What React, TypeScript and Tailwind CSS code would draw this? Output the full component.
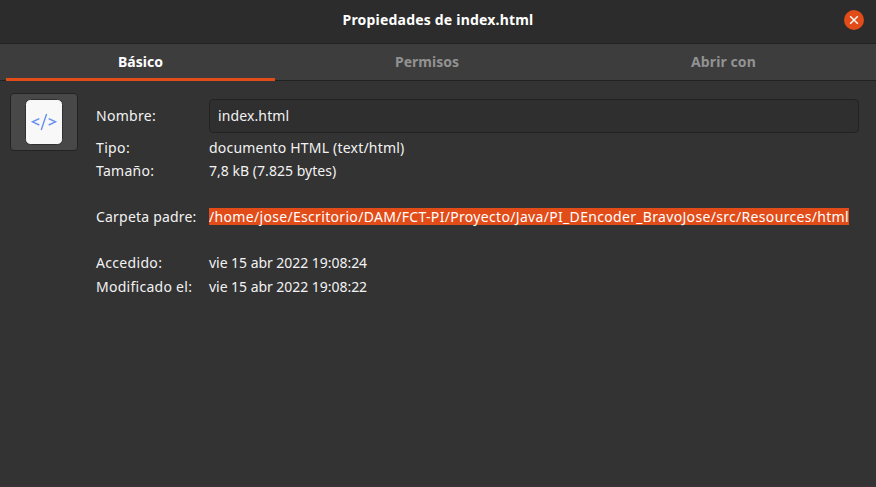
import React from "react";

type RowProps = { label: string; labelClass: string; rowClass: string; children: React.ReactNode };

function Row({ label, labelClass, rowClass, children }: RowProps) {
  return (
    <div className={`flex items-center ${rowClass}`}>
      <div className={`w-[113px] shrink-0 ${labelClass}`}>{label}</div>
      {children}
    </div>
  );
}

export default function App() {
  return (
    <div className="flex h-[487px] w-[876px] flex-col overflow-hidden border-b-2 border-[#3a3237] bg-[#333333] font-['Noto_Sans',sans-serif] text-[14px] leading-[18px] whitespace-nowrap text-[#f2f2f2]">
      <header className="flex h-[43px] shrink-0 items-center bg-[#2c2c2c] pr-3 pb-[3px] pl-8">
        <h1 className="flex-1 text-center text-[14px] font-bold tracking-[0.2px] text-white">
          <span>Propiedades de index.html</span>
        </h1>
        <button className="flex size-5 items-center justify-center rounded-full bg-[#e24c19]" aria-label="Cerrar">
          <svg width="10" height="10" viewBox="0 0 10 10" stroke="#fff" strokeWidth="1.4">
            <path d="M1.2 1.2 8.8 8.8M8.8 1.2 1.2 8.8" />
          </svg>
        </button>
      </header>
      <nav className="flex h-[38px] shrink-0 border-y border-[#222222] bg-[#3d3d3d] px-1.5 font-bold text-[#929292]">
        <div className="-mb-px flex w-[269px] items-center justify-center border-b-3 border-[#e24c19] pt-0.5 text-white"><span>Básico</span></div>
        <div className="flex w-[304px] items-center justify-center"><span>Permisos</span></div>
        <div className="flex flex-1 items-center justify-center pr-0.5"><span className="tracking-[0.1px]">Abrir con</span></div>
      </nav>
      <main className="flex flex-1 pt-3 pr-[17px] pl-2.5">
        <button className="flex h-[58px] w-[68px] items-center justify-center rounded-[4px] border border-[#232323] bg-[#484848]">
          <svg width="38" height="46" viewBox="0 0 38 46" fill="none">
            <rect x="0.5" y="0.5" width="37" height="45" rx="5" fill="#f8f8f8" stroke="#303030" />
            <path d="M14.3 19.7 7.5 22.8 14.3 26M23.7 19.7 30.5 22.8 23.7 26M21.6 15 16.2 31" stroke="#6590ef" strokeWidth="1.4" />
          </svg>
        </button>
        <section className="flex flex-1 flex-col pt-1.5 pl-[18px]">
          <Row label="Nombre:" labelClass="tracking-[0.28px]" rowClass="h-[34px]">
            <div className="flex h-[34px] flex-1 items-center rounded-[4px] border border-[#222222] bg-[#2f2f2f] px-2"><span className="tracking-[0.12px]">index.html</span></div>
          </Row>
          <Row label="Tipo:" labelClass="tracking-[0.35px]" rowClass="mt-1.5 h-[18px]"><span className="tracking-[0.2px]">documento HTML (text/html)</span></Row>
          <Row label="Tamaño:" labelClass="tracking-[0.28px]" rowClass="mt-[5px] h-[18px]"><span className="tracking-[0.03px]">7,8 kB (7.825 bytes)</span></Row>
          <Row label="Carpeta padre:" labelClass="tracking-[0.2px]" rowClass="mt-7 h-[18px]">
            <span className="-mt-px h-[17px] w-[640px] bg-[#e24c19] tracking-[0.32px] text-white">/home/jose/Escritorio/DAM/FCT-PI/Proyecto/Java/PI_DEncoder_BravoJose/src/Resources/html</span>
          </Row>
          <Row label="Accedido:" labelClass="tracking-[0.32px]" rowClass="mt-7 h-[18px]"><span className="tracking-[-0.04px]">vie 15 abr 2022 19:08:24</span></Row>
          <Row label="Modificado el:" labelClass="tracking-[0.27px]" rowClass="mt-1.5 h-[18px]"><span className="tracking-[-0.04px]">vie 15 abr 2022 19:08:22</span></Row>
        </section>
      </main>
    </div>
  );
}
